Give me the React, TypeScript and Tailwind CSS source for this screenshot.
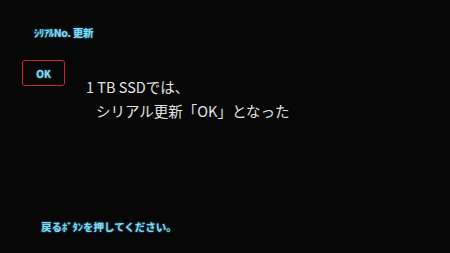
import React from "react";

const glow = "[text-shadow:0_0_2px_rgba(90,200,255,0.8)]";

const App: React.FC = () => {
  return (
    <div className="w-[450px] h-[253px] bg-[#070707] flex flex-col overflow-hidden font-['Noto_Sans_CJK_JP','Noto_Sans',sans-serif]">
      <div
        className={`ml-[34px] mt-[27px] text-[10.5px] leading-[12px] font-bold text-[#7fdcf5] tracking-[-0.3px] ${glow}`}
      >
        ｼﾘｱﾙNo. 更新
      </div>

      <div className="flex mt-[21px]">
        <div className="ml-[22px] w-[43px] h-[26px] border-[1.5px] border-[#c8252f] rounded-[3px] flex items-center justify-center">
          <span className={`text-[10px] font-bold text-[#86e0f5] ${glow}`}>OK</span>
        </div>
        <div className="ml-[21px] mt-[15px] text-[14.5px] leading-[24px] text-[#e4e4e4] font-['Noto_Sans_CJK_JP',sans-serif]">
          <div>1 TB SSDでは、</div>
          <div className="ml-[10px]">シリアル更新「OK」となった</div>
        </div>
      </div>

      <div
        className={`mt-auto mb-[19px] ml-[41px] text-[10.5px] leading-[14px] font-bold text-[#7fdcf5] ${glow}`}
      >
        戻るﾎﾞﾀﾝを押してください。
      </div>
    </div>
  );
};

export default App;
